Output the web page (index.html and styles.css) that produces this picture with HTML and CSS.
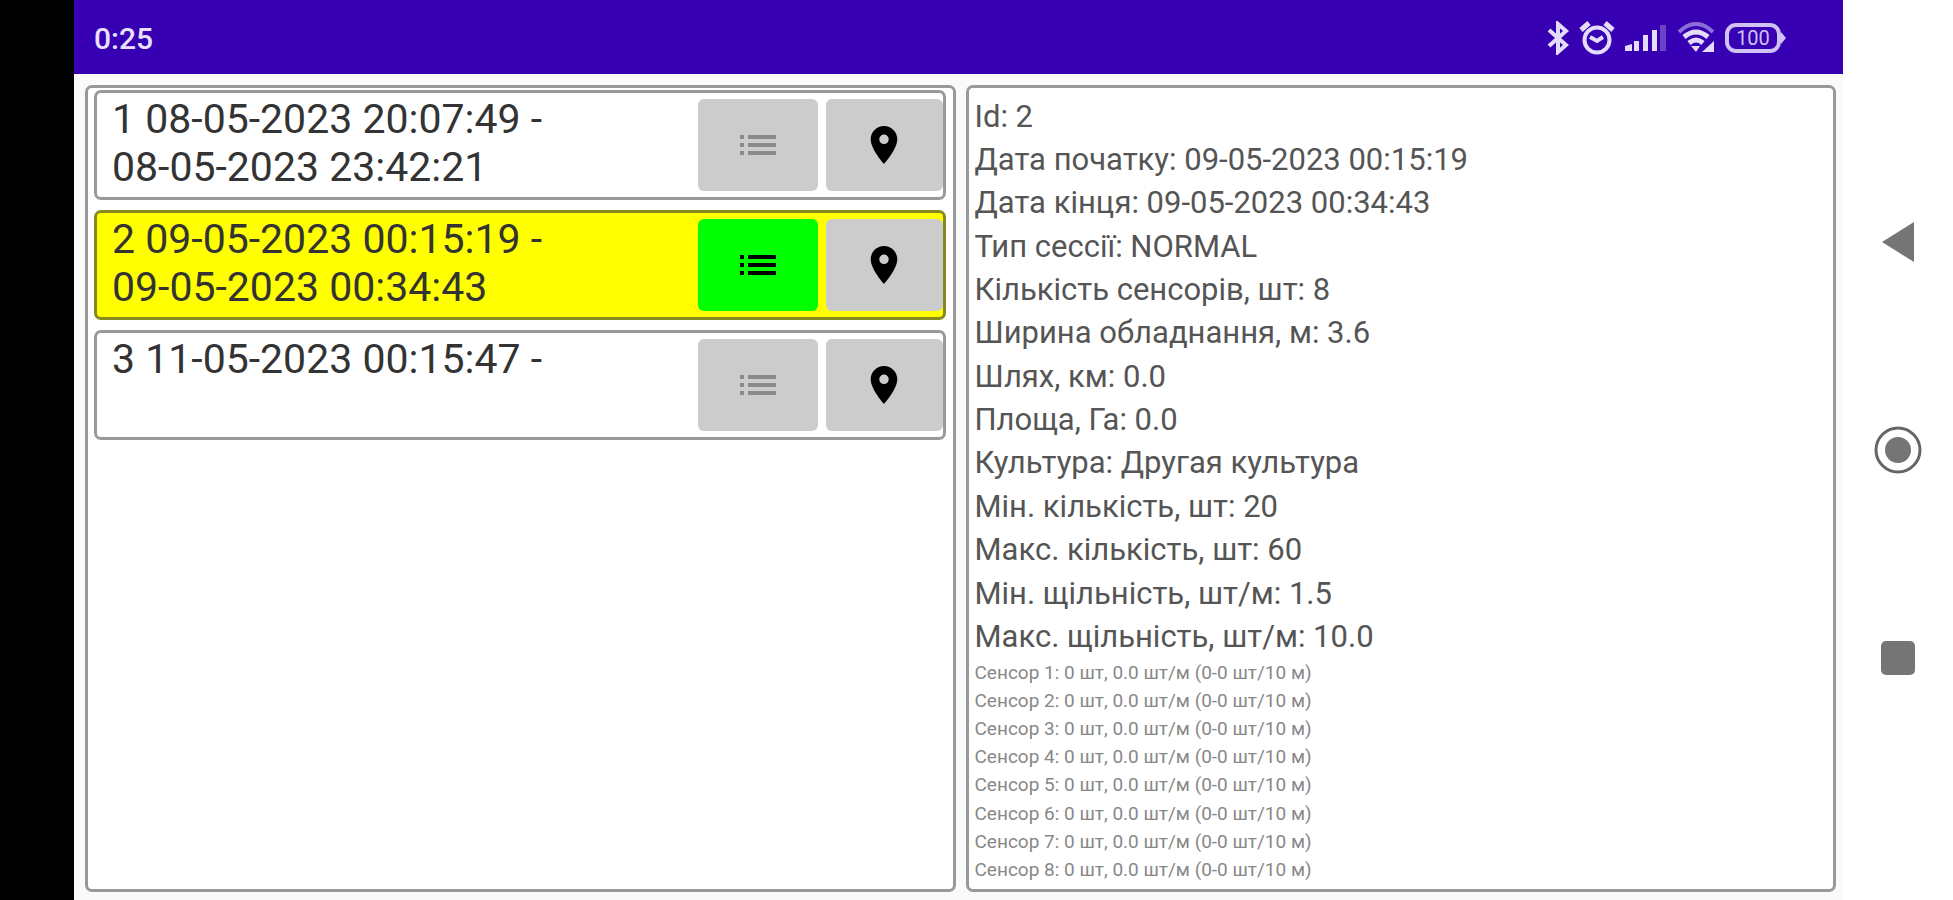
FILE: index.html
```html
<!DOCTYPE html>
<html lang="uk">
<head>
  <meta charset="UTF-8" />
  <title>Сесії</title>
  <link rel="stylesheet" href="styles.css">
</head>
<body>
  <svg class="sprite" aria-hidden="true">
    <symbol id="list" viewBox="0 0 36 22">
      <path d="M0 1h4v4H0zM8 1h28v4H8zM0 9h4v4H0zM8 9h28v4H8zM0 17h4v4H0zM8 17h28v4H8z"/>
    </symbol>
    <symbol id="pin" viewBox="5 2 14 20">
      <path d="M12 2C8.13 2 5 5.13 5 9c0 5.25 7 13 7 13s7-7.75 7-13c0-3.87-3.13-7-7-7zm0 9.500a2.500 2.500 0 1 1 0-5 2.500 2.500 0 0 1 0 5z"/>
    </symbol>
  </svg>

  <div class="app">
    <header class="status">
      <span class="clock">0:25</span>
      <div class="status-icons">
        <svg width="22" height="34" viewBox="0 0 22 34" fill="none" stroke="#e4dcfa" stroke-width="4">
          <path d="M2 9l17 15-8 7V3l8 7L2 25"/>
        </svg>
        <svg width="36" height="34" viewBox="0 0 36 34" fill="none" stroke="#e4dcfa" stroke-width="4">
          <circle cx="18" cy="19" r="12.500"/>
          <path d="M2 9l8-7M34 9l-8-7" stroke-width="5"/>
          <path d="M11 16l7 4 6-4"/>
        </svg>
        <svg width="42" height="28" viewBox="0 0 42 28" fill="#e4dcfa">
          <path d="M0 22l7-2v7H0zM9 17h5v10H9zM18 11h5v16h-5zM27 6h5v21h-5z"/>
          <path d="M35 1h6v26h-6z" opacity=".3"/>
        </svg>
        <svg width="38" height="32" viewBox="0 0 38 32" fill="none" stroke="#e4dcfa" stroke-width="4">
          <path d="M2 10Q19-6 36 10" opacity=".5"/>
          <path d="M7 15q12-10 24 0M12 21q7-6 14 0" stroke-width="5"/>
          <path d="M14 24h9l-4 6z" fill="#e4dcfa" stroke="none"/>
          <path d="M37 19v11H25z" fill="#e4dcfa" stroke="none"/>
        </svg>
        <svg width="62" height="30" viewBox="0 0 62 30">
          <rect x="2" y="2" width="52" height="26" rx="9" fill="none" stroke="#cfc2f5" stroke-width="4"/>
          <path d="M56 9l5 6-5 6z" fill="#cfc2f5"/>
          <text class="battery-text" x="28" y="22" text-anchor="middle">100</text>
        </svg>
      </div>
    </header>

    <main class="panels">
      <ul class="panel sessions">
        <li class="session">
          <p class="session-name">1 08-05-2023 20:07:49 -<br>08-05-2023 23:42:21</p>
          <button class="btn btn-list" aria-label="Деталі"><svg><use href="#list"/></svg></button>
          <button class="btn btn-pin" aria-label="Карта"><svg><use href="#pin"/></svg></button>
        </li>
        <li class="session selected">
          <p class="session-name">2 09-05-2023 00:15:19 -<br>09-05-2023 00:34:43</p>
          <button class="btn btn-list" aria-label="Деталі"><svg><use href="#list"/></svg></button>
          <button class="btn btn-pin" aria-label="Карта"><svg><use href="#pin"/></svg></button>
        </li>
        <li class="session">
          <p class="session-name">3 11-05-2023 00:15:47 -</p>
          <button class="btn btn-list" aria-label="Деталі"><svg><use href="#list"/></svg></button>
          <button class="btn btn-pin" aria-label="Карта"><svg><use href="#pin"/></svg></button>
        </li>
      </ul>

      <section class="panel details">
        <ul class="info">
          <li>Id: 2</li>
          <li>Дата початку: 09-05-2023 00:15:19</li>
          <li>Дата кінця: 09-05-2023 00:34:43</li>
          <li>Тип сессії: NORMAL</li>
          <li>Кількість сенсорів, шт: 8</li>
          <li>Ширина обладнання, м: 3.6</li>
          <li>Шлях, км: 0.0</li>
          <li>Площа, Га: 0.0</li>
          <li>Культура: Другая культура</li>
          <li>Мін. кількість, шт: 20</li>
          <li>Макс. кількість, шт: 60</li>
          <li>Мін. щільність, шт/м: 1.5</li>
          <li>Макс. щільність, шт/м: 10.0</li>
        </ul>
        <ul class="sensors">
          <li>Сенсор 1: 0 шт, 0.0 шт/м (0-0 шт/10 м)</li>
          <li>Сенсор 2: 0 шт, 0.0 шт/м (0-0 шт/10 м)</li>
          <li>Сенсор 3: 0 шт, 0.0 шт/м (0-0 шт/10 м)</li>
          <li>Сенсор 4: 0 шт, 0.0 шт/м (0-0 шт/10 м)</li>
          <li>Сенсор 5: 0 шт, 0.0 шт/м (0-0 шт/10 м)</li>
          <li>Сенсор 6: 0 шт, 0.0 шт/м (0-0 шт/10 м)</li>
          <li>Сенсор 7: 0 шт, 0.0 шт/м (0-0 шт/10 м)</li>
          <li>Сенсор 8: 0 шт, 0.0 шт/м (0-0 шт/10 м)</li>
        </ul>
      </section>
    </main>
  </div>

  <nav class="navbar">
    <button class="nav-btn" aria-label="Назад">
      <svg width="48" height="48" viewBox="0 0 48 48"><path d="M8 24L40 4v40z" fill="#757575"/></svg>
    </button>
    <button class="nav-btn" aria-label="Додому">
      <svg width="48" height="48" viewBox="0 0 48 48">
        <circle cx="24" cy="24" r="22" fill="none" stroke="#666" stroke-width="3"/>
        <circle cx="24" cy="24" r="13" fill="#757575"/>
      </svg>
    </button>
    <button class="nav-btn" aria-label="Огляд">
      <svg width="48" height="48" viewBox="0 0 48 48"><rect x="7" y="7" width="34" height="34" rx="5" fill="#757575"/></svg>
    </button>
  </nav>
</body>
</html>
```
FILE: styles.css
```css
body {
  margin: 0;
  background-color: #fff;
  color: #333;
  font-family: Roboto, sans-serif;
  display: flex;
  height: 100vh;
  border-left: 74px solid #000;
  box-sizing: border-box;
}

ul, p {
  margin: 0;
  padding: 0;
  list-style: none;
}

button {
  border: none;
  padding: 0;
  cursor: pointer;
}

.sprite {
  display: none;
}

.app {
  flex: 1;
  display: flex;
  flex-direction: column;
  background-color: #fafafa;
}

.status {
  height: 74px;
  box-sizing: border-box;
  padding: 2px 56px 0 20px;
  display: flex;
  align-items: center;
  justify-content: space-between;
  background-color: #3700b3;
}

.clock {
  color: #e8e0fc;
  font-size: 30px;
  font-weight: 500;
}

.status-icons {
  display: flex;
  align-items: center;
  gap: 10px;
}

.battery-text {
  fill: #cfc2f5;
  font-size: 20px;
}

.panels {
  flex: 1;
  display: grid;
  grid-template-columns: 1fr 1fr;
  gap: 10px;
  padding: 11px 7px 8px 11px;
}

.panel {
  background-color: #fff;
  border: 3px solid #999;
  border-radius: 7px;
}

.sessions {
  display: flex;
  flex-direction: column;
  gap: 10px;
  padding: 2px 7px 2px 6px;
}

.session {
  height: 110px;
  box-sizing: border-box;
  display: flex;
  align-items: center;
  gap: 8px;
  padding-left: 15px;
  border: 3px solid #999;
  border-radius: 7px;
}

.session-name {
  flex: 1;
  align-self: flex-start;
  padding-top: 2px;
  font-size: 41px;
  line-height: 48px;
}

.btn {
  height: 92px;
  display: flex;
  align-items: center;
  justify-content: center;
  background-color: #ccc;
  border-radius: 6px;
}

.btn-list {
  width: 120px;
}

.btn-list svg {
  width: 36px;
  height: 22px;
  fill: #8a8a8a;
}

.btn-pin {
  width: 117px;
}

.btn-pin svg {
  width: 28px;
  height: 38px;
  fill: #000;
}

.selected {
  background-color: #ff0;
  border-color: #888820;
}

.selected .btn-list {
  background-color: #0f0;
}

.selected .btn-list svg {
  fill: #000;
}

.details {
  display: flex;
  flex-direction: column;
  padding: 7px 7px 5px 6px;
}

.info {
  flex: 5;
  display: grid;
  grid-auto-rows: 1fr;
  align-items: center;
  font-size: 31px;
  line-height: 36px;
  color: #555;
}

.sensors {
  flex: 2;
  display: grid;
  grid-auto-rows: 1fr;
  align-items: center;
  font-size: 19px;
  line-height: 22px;
  color: #888;
}

.navbar {
  width: 110px;
  display: flex;
  flex-direction: column;
  align-items: center;
  justify-content: center;
  gap: 160px;
}

.nav-btn {
  width: 48px;
  height: 48px;
  background: none;
}
```
